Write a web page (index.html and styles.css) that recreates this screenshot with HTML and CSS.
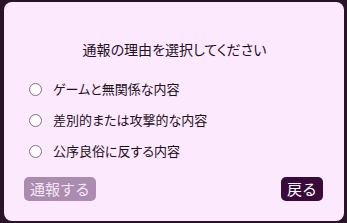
FILE: index.html
```html
<!DOCTYPE html>
<html lang="ja">
<head>
    <meta charset="UTF-8">
    <meta name="viewport" content="width=device-width, initial-scale=1.0">
    <title>通報</title>
    <link rel="stylesheet" href="styles.css">
</head>
<body>
    <div id="report-dialog">
        <h2 class="dialog-title">通報の理由を選択してください</h2>

        <div id="reasons" role="radiogroup">
            <label class="reason">
                <input type="radio" name="reason" value="unrelated">
                <span class="radio-mark"></span>
                <span>ゲームと無関係な内容</span>
            </label>
            <label class="reason">
                <input type="radio" name="reason" value="abusive">
                <span class="radio-mark"></span>
                <span>差別的または攻撃的な内容</span>
            </label>
            <label class="reason">
                <input type="radio" name="reason" value="indecent">
                <span class="radio-mark"></span>
                <span>公序良俗に反する内容</span>
            </label>
        </div>

        <div class="dialog-buttons">
            <button id="send-report" class="btn btn-report" disabled>通報する</button>
            <button id="back" class="btn btn-back">戻る</button>
        </div>
    </div>
</body>
</html>
```

FILE: styles.css
```css
html {
    font-family: "Noto Sans CJK JP", "Noto Sans", sans-serif;
    font-feature-settings: "palt";
    background-color: #2a1229;
    color: #1c1020;
}
body {
    margin: 0;
    padding: 2px 3px 2px 4px;
}

#report-dialog {
    box-sizing: border-box;
    height: 219px;
    background-color: #fde9fd;
    border-radius: 8px;
    padding: 38px 21px 0 20px;
    display: flex;
    flex-direction: column;
}

.dialog-title {
    margin: 0;
    text-align: center;
    font-size: 14px;
    font-weight: normal;
    line-height: 18px;
    padding-left: 2px;
}

#reasons {
    margin-top: 22px;
    padding-left: 4px;
    display: flex;
    flex-direction: column;
    gap: 13px;
}
.reason {
    display: flex;
    align-items: center;
    gap: 11px;
    font-size: 13px;
    line-height: 18px;
    cursor: pointer;
}
.reason input {
    display: none;
}
.radio-mark {
    box-sizing: border-box;
    width: 13px;
    height: 13px;
    margin-left: 1px;
    border: 1px solid #7a7080;
    border-radius: 50%;
    background-color: #ffffff;
}
.reason input:checked + .radio-mark {
    border: 4px solid #3a0a3a;
}

.dialog-buttons {
    margin-top: auto;
    margin-bottom: 20px;
    display: flex;
    justify-content: space-between;
}

.btn {
    font-family: inherit;
    font-size: 15px;
    line-height: 20px;
    padding: 2px 6px;
    border: none;
    border-radius: 5px;
    cursor: pointer;
}
.btn-report {
    background-color: #ab8cb0;
    color: #f4e6f4;
}
.btn-back {
    background-color: #3a0a3b;
    color: #ffffff;
}
```
